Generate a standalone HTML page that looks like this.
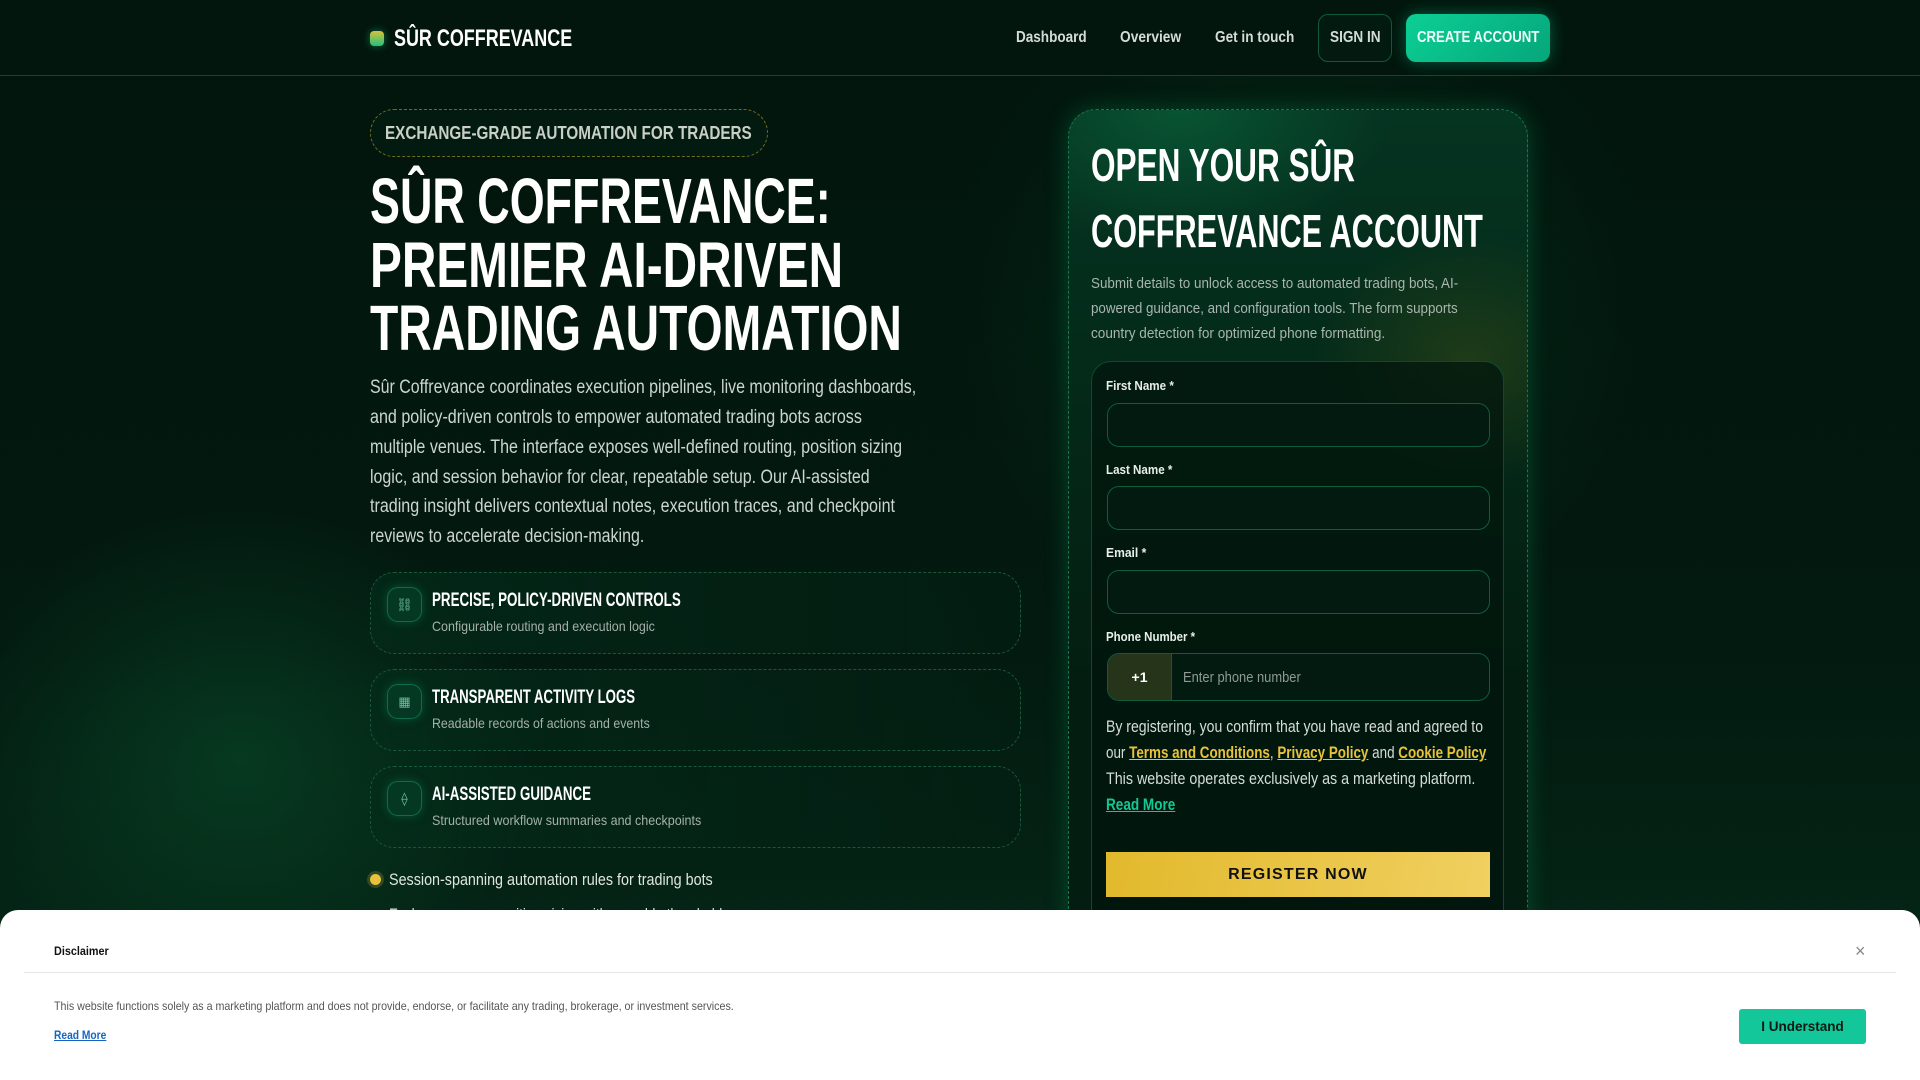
<!DOCTYPE html>
<html><head><meta charset="utf-8">
<style>
*{margin:0;padding:0;box-sizing:border-box}
html,body{width:1920px;height:1080px;overflow:hidden}
body{font-family:"Liberation Sans",sans-serif;color:#e8efe9;position:relative;
background:
radial-gradient(ellipse 420px 360px at 240px 760px, rgba(10,90,50,.45), transparent 70%),
radial-gradient(ellipse 500px 500px at 1300px 300px, rgba(6,70,40,.35), transparent 70%),
linear-gradient(180deg,#02150c 0%,#031a10 60%,#052a18 100%);}
.abs{position:absolute}
.f{display:block;width:max-content;white-space:nowrap;transform-origin:0 50%}
header{position:absolute;left:0;top:0;width:1920px;height:76px;background:#02160d;border-bottom:1px solid #0b4a30}
.logo-sq{left:370px;top:31px;width:14px;height:15px;border-radius:4px;background:linear-gradient(180deg,#d8c23a,#1fc27f);box-shadow:0 0 8px rgba(40,200,130,.5)}
.nav{font-weight:bold;font-size:16px;color:#d4dcd6}
.btn-in{left:1318px;top:14px;width:74px;height:48px;border:1px solid #0f5a3c;border-radius:10px;background:#021a0f}
.btn-ca{left:1406px;top:14px;width:144px;height:48px;border-radius:10px;background:linear-gradient(135deg,#0ccf95,#06a67a);box-shadow:0 0 16px rgba(12,200,140,.4)}
.badge{left:370px;top:109px;width:398px;height:48px;border:1px dashed #6e6d1e;border-radius:24px;background:rgba(5,30,18,.6)}
.h1{font-weight:bold;font-size:64px;color:#fff;line-height:64px}
.p{font-size:19px;color:#cdd5cf}
.card{left:370px;width:651px;height:82px;border:1px dashed #19583a;border-radius:24px;background:linear-gradient(90deg,rgba(4,44,26,.7),rgba(3,30,18,.6))}
.ic{position:absolute;left:16px;top:14px;width:35px;height:35px;border-radius:11px;border:1px solid #0f6b4c;background:#053823;box-shadow:0 0 10px rgba(12,160,100,.35);color:#6fbf9e;font-size:13px;text-align:center;line-height:33px}
.ct{position:absolute;left:61px;top:17px;font-weight:bold;font-size:19px;color:#fff}
.cs{position:absolute;left:61px;top:45px;font-size:14px;color:#a5b0a8}
.form{left:1068px;top:109px;width:460px;height:1000px;border:1px dashed #1a7550;border-radius:28px;
background:radial-gradient(ellipse 300px 200px at 110px 0px,rgba(10,110,65,.55),transparent 70%),radial-gradient(ellipse 220px 180px at 400px 250px,rgba(80,90,20,.35),transparent 70%),linear-gradient(180deg,#053421,#031d10 60%);
box-shadow:0 0 22px rgba(10,150,90,.35)}
.inner{left:1091px;top:361px;width:413px;height:600px;border:1px solid #0d4a31;border-radius:20px;background:rgba(1,22,12,.75)}
.lbl{font-weight:bold;font-size:13px;color:#e8efe9}
.inp{left:1107px;width:383px;height:44px;border:1px solid #0f5c3f;border-radius:12px;background:#021a0f}
.con{font-size:16.5px;color:#d6ddd7}
.y{color:#e8c23a;font-weight:bold;text-decoration:underline}
.g{color:#10c994;font-weight:bold;text-decoration:underline}
.disc{left:0;top:910px;width:1920px;height:170px;background:#fff;border-radius:18px 18px 0 0}
</style></head><body>
<header></header>
<div class="abs logo-sq"></div>
<div class="abs f" style="left:394px;top:25px;font-size:24px;font-weight:bold;color:#fff;--w:178px">SÛR COFFREVANCE</div>
<div class="abs f nav" style="left:1016px;top:29px;--w:71px">Dashboard</div>
<div class="abs f nav" style="left:1120px;top:29px;--w:61px">Overview</div>
<div class="abs f nav" style="left:1215px;top:29px;--w:79px">Get in touch</div>
<div class="abs btn-in"></div>
<div class="abs f nav" style="left:1330px;top:29px;--w:51px">SIGN IN</div>
<div class="abs btn-ca"></div>
<div class="abs f nav" style="left:1417px;top:29px;color:#eafff7;--w:122px">CREATE ACCOUNT</div>

<div class="abs badge"></div>
<div class="abs f" style="left:385px;top:123px;font-size:18px;font-weight:bold;color:#c9d1c6;--w:367px">EXCHANGE-GRADE AUTOMATION FOR TRADERS</div>

<div class="abs f h1" style="left:370px;top:169px;--w:461px">SÛR COFFREVANCE:</div>
<div class="abs f h1" style="left:370px;top:233px;--w:473px">PREMIER AI-DRIVEN</div>
<div class="abs f h1" style="left:370px;top:296px;--w:532px">TRADING AUTOMATION</div>

<div class="abs f p" style="left:370px;top:377px;--w:546px">Sûr Coffrevance coordinates execution pipelines, live monitoring dashboards,</div>
<div class="abs f p" style="left:370px;top:407px;--w:492px">and policy-driven controls to empower automated trading bots across</div>
<div class="abs f p" style="left:370px;top:437px;--w:532px">multiple venues. The interface exposes well-defined routing, position sizing</div>
<div class="abs f p" style="left:370px;top:467px;--w:500px">logic, and session behavior for clear, repeatable setup. Our AI-assisted</div>
<div class="abs f p" style="left:370px;top:496px;--w:525px">trading insight delivers contextual notes, execution traces, and checkpoint</div>
<div class="abs f p" style="left:370px;top:526px;--w:274px">reviews to accelerate decision-making.</div>

<div class="abs card" style="top:572px"><div class="ic">⛓</div><div class="f ct" style="--w:249px">PRECISE, POLICY-DRIVEN CONTROLS</div><div class="f cs" style="--w:223px">Configurable routing and execution logic</div></div>
<div class="abs card" style="top:669px"><div class="ic">▦</div><div class="f ct" style="--w:203px">TRANSPARENT ACTIVITY LOGS</div><div class="f cs" style="--w:218px">Readable records of actions and events</div></div>
<div class="abs card" style="top:766px"><div class="ic">⟠</div><div class="f ct" style="--w:159px">AI-ASSISTED GUIDANCE</div><div class="f cs" style="--w:269px">Structured workflow summaries and checkpoints</div></div>

<div class="abs" style="left:370px;top:874px;width:11px;height:11px;border-radius:50%;background:#e8c23a;box-shadow:0 0 0 3px rgba(232,194,58,.2)"></div>
<div class="abs f" style="left:389px;top:870px;font-size:17px;color:#dfe6e0;--w:324px">Session-spanning automation rules for trading bots</div>
<div class="abs" style="left:370px;top:910px;width:11px;height:11px;border-radius:50%;background:#8a7a2a"></div>
<div class="abs f" style="left:389px;top:905px;font-size:17px;color:#dfe6e0;--w:340px">Exchange-aware position sizing with reusable thresholds</div>

<div class="abs form"></div>
<div class="abs f" style="left:1091px;top:138px;font-size:46px;font-weight:bold;color:#fff;--w:264px">OPEN YOUR SÛR</div>
<div class="abs f" style="left:1091px;top:204px;font-size:46px;font-weight:bold;color:#fff;--w:392px">COFFREVANCE ACCOUNT</div>
<div class="abs f" style="left:1091px;top:275px;font-size:15px;color:#a9b5ad;--w:367px">Submit details to unlock access to automated trading bots, AI-</div>
<div class="abs f" style="left:1091px;top:300px;font-size:15px;color:#a9b5ad;--w:367px">powered guidance, and configuration tools. The form supports</div>
<div class="abs f" style="left:1091px;top:325px;font-size:15px;color:#a9b5ad;--w:294px">country detection for optimized phone formatting.</div>

<div class="abs inner"></div>
<div class="abs f lbl" style="left:1106px;top:378px;--w:68px">First Name *</div>
<div class="abs inp" style="top:403px"></div>
<div class="abs f lbl" style="left:1106px;top:462px;--w:66px">Last Name *</div>
<div class="abs inp" style="top:486px"></div>
<div class="abs f lbl" style="left:1106px;top:545px;--w:40px">Email *</div>
<div class="abs inp" style="top:570px"></div>
<div class="abs f lbl" style="left:1106px;top:629px;--w:89px">Phone Number *</div>
<div class="abs inp" style="top:653px;height:48px;overflow:hidden"><div style="position:absolute;left:0;top:0;width:64px;height:48px;background:#26341a;border-right:1px solid #0f5c3f;text-align:center;line-height:46px;font-weight:bold;font-size:14px;color:#fff">+1</div></div>
<div class="abs f" style="left:1183px;top:669px;font-size:15px;color:#8f9a93;--w:118px">Enter phone number</div>

<div class="abs f con" style="left:1106px;top:718px;--w:377px">By registering, you confirm that you have read and agreed to</div>
<div class="abs f con" style="left:1106px;top:744px;--w:380px">our <span class="y">Terms and Conditions</span>, <span class="y">Privacy Policy</span> and <span class="y">Cookie Policy</span></div>
<div class="abs f con" style="left:1106px;top:770px;--w:369px">This website operates exclusively as a marketing platform.</div>
<div class="abs f con" style="left:1106px;top:796px;--w:69px"><span class="g">Read More</span></div>
<div class="abs" style="left:1106px;top:852px;width:384px;height:45px;background:linear-gradient(100deg,#e2b92c,#f0d060);text-align:center;line-height:45px;font-weight:bold;font-size:16px;letter-spacing:1.2px;color:#111">REGISTER NOW</div>

<div class="abs disc"></div>
<div class="abs f" style="left:54px;top:944px;font-size:12px;font-weight:bold;color:#111;--w:55px">Disclaimer</div>
<div class="abs" style="left:24px;top:972px;width:1872px;height:1px;background:#e6e6e6"></div>
<div class="abs" style="left:1855px;top:941px;font-size:18px;color:#888">×</div>
<div class="abs f" style="left:54px;top:999px;font-size:12px;color:#555;--w:680px">This website functions solely as a marketing platform and does not provide, endorse, or facilitate any trading, brokerage, or investment services.</div>
<div class="abs f" style="left:54px;top:1028px;font-size:12px;font-weight:bold;color:#1565c0;text-decoration:underline;--w:52px">Read More</div>
<div class="abs" style="left:1739px;top:1009px;width:127px;height:35px;background:#14c79a;border-radius:3px;text-align:center;line-height:35px;font-weight:bold;font-size:13.5px;color:#0a1a12">I Understand</div>

<script>
document.querySelectorAll('.f').forEach(function(e){
  var w=parseFloat(getComputedStyle(e).getPropertyValue('--w'));
  if(w){var a=e.scrollWidth||e.offsetWidth;if(a)e.style.transform='scaleX('+(w/a)+')';}
});
</script>
</body></html>
